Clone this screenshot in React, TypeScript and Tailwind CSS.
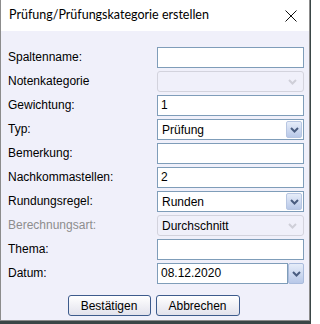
import React from 'react'

const labelFont = { fontFamily: '"Liberation Sans", Arial, sans-serif' }

const Chevron = ({ disabled }: { disabled?: boolean }) => (
    <svg width="9" height="6" viewBox="0 0 9 6">
        <path
            d="M1 1 L4.5 4.5 L8 1"
            fill="none"
            stroke={disabled ? '#cfcfd8' : '#4a5d80'}
            strokeWidth="2"
        />
    </svg>
)

const TextBox = ({ value }: { value?: string }) => (
    <div className="h-[21px] w-[147px] border border-[#7f9db9] bg-white px-[3px] text-[12px] leading-[19px] text-black">
        {value}
    </div>
)

const Combo = ({ value, disabled }: { value?: string; disabled?: boolean }) =>
    disabled ? (
        <div className="flex h-[21px] w-[147px] items-center justify-between rounded-[3px] border border-[#d3d3dd] bg-[#f0f0fa] pl-[4px] pr-[6px] text-[12px] text-black">
            <span>{value}</span>
            <Chevron disabled />
        </div>
    ) : (
        <div className="flex h-[21px] w-[147px] items-center justify-between border border-[#7f9db9] bg-white pl-[4px] pr-[1px] text-[12px] text-black">
            <span>{value}</span>
            <div className="flex h-[17px] w-[16px] items-center justify-center rounded-[2px] border border-[#b7c6e2] bg-gradient-to-b from-[#e6edf9] to-[#b8c8e8]">
                <Chevron />
            </div>
        </div>
    )

const DateBox = ({ value }: { value: string }) => (
    <div className="flex h-[21px] w-[147px]">
        <div className="h-[21px] w-[132px] border border-[#7f9db9] bg-white px-[3px] text-[12px] leading-[19px] text-black">
            {value}
        </div>
        <div className="flex h-[21px] w-[16px] items-center justify-center rounded-[2px] border border-[#a9bbdc] bg-gradient-to-b from-[#e6edf9] to-[#b8c8e8]">
            <Chevron />
        </div>
    </div>
)

const rows: { label: string; disabled?: boolean; field: React.ReactNode }[] = [
    { label: 'Spaltenname:', field: <TextBox /> },
    { label: 'Notenkategorie', field: <Combo disabled /> },
    { label: 'Gewichtung:', field: <TextBox value="1" /> },
    { label: 'Typ:', field: <Combo value="Prüfung" /> },
    { label: 'Bemerkung:', field: <TextBox /> },
    { label: 'Nachkommastellen:', field: <TextBox value="2" /> },
    { label: 'Rundungsregel:', field: <Combo value="Runden" /> },
    { label: 'Berechnungsart:', disabled: true, field: <Combo value="Durchschnitt" disabled /> },
    { label: 'Thema:', field: <TextBox /> },
    { label: 'Datum:', field: <DateBox value="08.12.2020" /> },
]

export default function App() {
    return (
        <div className="h-[324px] w-[311px] overflow-hidden bg-[#3a4646]" style={labelFont}>
            <div className="h-[321px] w-[310px] border-x border-b border-[#8c8c8c] bg-[#f0f0fa]">
                <div className="flex h-[31px] items-center justify-between bg-white pl-[8px] pr-[12px]">
                    <span
                        className="text-[12.5px] text-black"
                        style={{ fontFamily: 'Lato, "Liberation Sans", sans-serif' }}
                    >
                        Prüfung/Prüfungskategorie erstellen
                    </span>
                    <svg width="12" height="12" viewBox="0 0 12 12">
                        <path d="M0.5 0.5 L11.5 11.5 M11.5 0.5 L0.5 11.5" stroke="#111" strokeWidth="1" />
                    </svg>
                </div>
                <div className="flex flex-col pl-[7px] pt-[16px]">
                    {rows.map((r) => (
                        <div key={r.label} className="grid h-[24px] grid-cols-[149px_147px]">
                            <span
                                className={`text-[12px] leading-[21px] ${r.disabled ? 'text-[#8d8d8d]' : 'text-black'}`}
                            >
                                {r.label}
                            </span>
                            {r.field}
                        </div>
                    ))}
                    <div className="mt-[8px] flex justify-center gap-[5px] pr-[10px]">
                        <button className="h-[21px] w-[83px] rounded-[3px] border border-[#3d5b8c] bg-gradient-to-b from-white to-[#e2e2ec] text-[12px] text-black">
                            Bestätigen
                        </button>
                        <button className="h-[21px] w-[84px] rounded-[3px] border border-[#3d5b8c] bg-gradient-to-b from-white to-[#e2e2ec] text-[12px] text-black">
                            Abbrechen
                        </button>
                    </div>
                </div>
            </div>
        </div>
    )
}
